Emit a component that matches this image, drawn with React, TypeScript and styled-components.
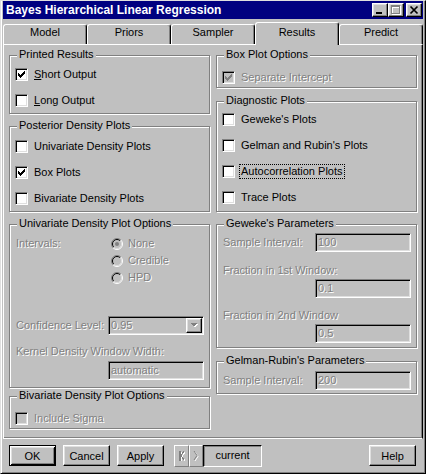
import React from 'react'
import styled, { createGlobalStyle, css } from 'styled-components'

const GlobalStyle = createGlobalStyle`
  html, body {
    margin: 0;
    padding: 0;
    background: #c0c0c0;
  }
  body {
    font-family: "Liberation Sans", Arial, sans-serif;
    font-size: 11px;
    color: #000;
  }
  * {
    box-sizing: border-box;
  }
`

const raised = css`
  border: 1px solid;
  border-color: #fff #000 #000 #fff;
  box-shadow: inset -1px -1px #808080, inset 1px 1px #dfdfdf;
`

const sunken = css`
  border: 1px solid;
  border-color: #808080 #fff #fff #808080;
  box-shadow: inset 1px 1px #000, inset -1px -1px #dfdfdf;
`

const dim = css`
  color: #808080;
  text-shadow: 1px 1px 0 #fff;
`

const Window = styled.div`
  width: 426px;
  height: 474px;
  display: flex;
  flex-direction: column;
  padding: 0 2px 1px 2px;
  border: 1px solid;
  border-color: #dfdfdf #000 #000 #dfdfdf;
  box-shadow: inset 1px 0 #fff, inset -1px -1px #808080;
  background: #c0c0c0;
`

const TitleBar = styled.div`
  height: 18px;
  flex: none;
  display: flex;
  align-items: center;
  padding: 0 1px 0 3px;
  background: #000080;
`

const TitleText = styled.div`
  flex: 1;
  color: #fff;
  font-weight: bold;
  font-size: 12px;
  white-space: nowrap;
`

const CaptionButton = styled.div<{ $gap?: number }>`
  width: 16px;
  height: 14px;
  margin-left: ${p => p.$gap ?? 0}px;
  background: #c0c0c0;
  ${raised}
  svg {
    display: block;
  }
`

const TabStrip = styled.div`
  height: 25px;
  flex: none;
  display: flex;
  align-items: flex-end;
`

const Tab = styled.div<{ $active?: boolean }>`
  position: relative;
  z-index: ${p => (p.$active ? 1 : 0)};
  width: 84px;
  height: ${p => (p.$active ? 23 : 20)}px;
  margin-bottom: ${p => (p.$active ? -1 : 0)}px;
  padding-top: ${p => (p.$active ? 3 : 1)}px;
  background: #c0c0c0;
  border: 1px solid;
  border-bottom: none;
  border-color: #fff #000 transparent #fff;
  border-radius: 3px 3px 0 0;
  box-shadow: inset -1px 0 #808080;
  text-align: center;
  line-height: 13px;
`

const Page = styled.div`
  height: 395px;
  flex: none;
  border: 1px solid;
  border-color: #fff #000 #fff #fff;
  box-shadow: inset -1px 0 #808080, inset 0 -1px #808080;
  padding: 0 4px 0 5px;
  display: grid;
  grid-template-columns: 201px 201px;
  column-gap: 6px;
  align-content: start;
`

const Column = styled.div`
  display: flex;
  flex-direction: column;
`

const Group = styled.div<{ $h: number; $mt: number }>`
  height: ${p => p.$h}px;
  margin-top: ${p => p.$mt}px;
  border: 1px solid #808080;
  box-shadow: inset 1px 1px #fff, 1px 1px #fff;
  padding: 0 5px;
`

const Caption = styled.div`
  width: fit-content;
  margin: -8px 0 0 2px;
  padding: 0 2px;
  line-height: 13px;
  background: #c0c0c0;
  white-space: nowrap;
`

const CheckList = styled.div<{ $mt?: number }>`
  margin-top: ${p => p.$mt ?? 0}px;
`

const CheckRow = styled.div`
  height: 26px;
  display: flex;
  align-items: center;
  gap: 4px;
`

const CheckBox = styled.span<{ $disabled?: boolean }>`
  width: 13px;
  height: 13px;
  flex: none;
  padding: 2px;
  ${sunken}
  background: ${p => (p.$disabled ? '#c0c0c0' : '#fff')};
  svg {
    display: block;
  }
`

const CheckText = styled.span<{ $disabled?: boolean; $focused?: boolean }>`
  padding: 0 1px;
  line-height: 13px;
  white-space: nowrap;
  border: 1px dotted ${p => (p.$focused ? '#000' : 'transparent')};
  ${p => p.$disabled && dim}
  u {
    text-decoration: underline;
    text-underline-offset: 1px;
  }
`

const FieldLabel = styled.div<{ $mt?: number; $w?: number; $lh?: number }>`
  margin-top: ${p => p.$mt ?? 0}px;
  margin-left: 1px;
  width: ${p => (p.$w ? `${p.$w}px` : 'auto')};
  flex: none;
  line-height: ${p => p.$lh ?? 13}px;
  white-space: nowrap;
  ${dim}
`

const FieldRow = styled.div<{ $mt?: number }>`
  margin-top: ${p => p.$mt ?? 0}px;
  display: flex;
  align-items: center;
  justify-content: space-between;
`

const IntervalRow = styled.div`
  margin-top: 5px;
  display: flex;
`

const RadioList = styled.div`
  display: flex;
  flex-direction: column;
  margin-left: 1px;
`

const RadioRow = styled.div`
  height: 17px;
  display: flex;
  align-items: center;
  gap: 5px;
  svg {
    display: block;
    flex: none;
  }
`

const RadioText = styled.span`
  line-height: 13px;
  ${dim}
`

const TextBox = styled.div`
  width: 96px;
  height: 19px;
  margin-left: auto;
  padding: 1px 1px 1px 2px;
  ${sunken}
  background: #c0c0c0;
  line-height: 15px;
  ${dim}
`

const Combo = styled.div`
  width: 96px;
  height: 19px;
  padding: 1px;
  ${sunken}
  background: #c0c0c0;
  display: flex;
  align-items: center;
`

const ComboValue = styled.span`
  flex: 1;
  padding-left: 1px;
  line-height: 15px;
  ${dim}
`

const ComboButton = styled.div`
  width: 16px;
  height: 15px;
  ${raised}
  display: flex;
  align-items: center;
  justify-content: center;
`

const Footer = styled.div`
  height: 33px;
  flex: none;
  display: flex;
  align-items: flex-start;
  gap: 7px;
  padding: 6px 7px 0 6px;
`

const Button = styled.button<{ $default?: boolean }>`
  width: 47px;
  height: 21px;
  padding: 0;
  background: #c0c0c0;
  font: inherit;
  color: #000;
  ${p =>
    p.$default
      ? css`
          border: 1px solid #000;
          box-shadow: inset 1px 1px #fff, inset -1px -1px #000, inset 2px 2px #dfdfdf, inset -2px -2px #808080;
        `
      : raised}
`

const NavGroup = styled.div`
  display: flex;
  margin-left: 3px;
`

const NavButton = styled.div<{ $w: number }>`
  width: ${p => p.$w}px;
  height: 22px;
  border: 1px solid;
  border-color: #fff #808080 #808080 #fff;
  display: flex;
  align-items: center;
  justify-content: center;
`

const CurrentField = styled.div`
  width: 59px;
  height: 22px;
  border: 1px solid;
  border-color: #000 #fff #fff #000;
  box-shadow: inset 1px 1px #808080;
  text-align: center;
  line-height: 18px;
`

const HelpButton = styled(Button)`
  margin-left: auto;
`

const CheckMark: React.FC<{ disabled?: boolean }> = ({ disabled }) => (
  <svg width="7" height="7" viewBox="0 0 7 7" shapeRendering="crispEdges">
    <path
      fill={disabled ? '#808080' : '#000'}
      d="M0 2h1v3H0zM1 3h1v3H1zM2 4h1v3H2zM3 3h1v3H3zM4 2h1v3H4zM5 1h1v3H5zM6 0h1v3H6z"
    />
  </svg>
)

const Check: React.FC<{
  label: React.ReactNode
  checked?: boolean
  disabled?: boolean
  focused?: boolean
}> = ({ label, checked, disabled, focused }) => (
  <CheckRow>
    <CheckBox $disabled={disabled}>{checked && <CheckMark disabled={disabled} />}</CheckBox>
    <CheckText $disabled={disabled} $focused={focused}>
      {label}
    </CheckText>
  </CheckRow>
)

const Radio: React.FC<{ label: string; checked?: boolean }> = ({ label, checked }) => (
  <RadioRow>
    <svg width="12" height="12" viewBox="0 0 12 12">
      <circle cx="6" cy="6" r="4.5" fill="#c0c0c0" />
      <path d="M2.1 9.9A5.5 5.5 0 0 1 9.9 2.1" stroke="#808080" fill="none" />
      <path d="M9.9 2.1A5.5 5.5 0 0 1 2.1 9.9" stroke="#fff" fill="none" />
      <path d="M2.8 9.2A4.5 4.5 0 0 1 9.2 2.8" stroke="#000" fill="none" />
      <path d="M9.2 2.8A4.5 4.5 0 0 1 2.8 9.2" stroke="#dfdfdf" fill="none" />
      {checked && <circle cx="6" cy="6" r="2" fill="#808080" />}
    </svg>
    <RadioText>{label}</RadioText>
  </RadioRow>
)

const tabs = ['Model', 'Priors', 'Sampler', 'Results', 'Predict']

export default function App() {
  return (
    <>
      <GlobalStyle />
      <Window>
        <TitleBar>
          <TitleText>Bayes Hierarchical Linear Regression</TitleText>
          <CaptionButton>
            <svg width="14" height="12" viewBox="0 0 14 12" shapeRendering="crispEdges">
              <rect x="3" y="8" width="6" height="2" fill="#000" />
            </svg>
          </CaptionButton>
          <CaptionButton>
            <svg width="14" height="12" viewBox="0 0 14 12" shapeRendering="crispEdges">
              <path d="M3 2h9v9H3zM4 4v6h7V4z" fill="#fff" fillRule="evenodd" />
              <path d="M2 1h9v9H2zM3 3v6h7V3z" fill="#808080" fillRule="evenodd" />
            </svg>
          </CaptionButton>
          <CaptionButton $gap={2}>
            <svg width="14" height="12" viewBox="0 0 14 12">
              <path d="M3.5 2.5L10.5 9.5M10.5 2.5L3.5 9.5" stroke="#000" strokeWidth="1.7" />
            </svg>
          </CaptionButton>
        </TitleBar>

        <TabStrip>
          {tabs.map(t => (
            <Tab key={t} $active={t === 'Results'}>
              {t}
            </Tab>
          ))}
        </TabStrip>

        <Page>
          <Column>
            <Group $h={59} $mt={10}>
              <Caption>Printed Results</Caption>
              <CheckList>
                <Check checked label={<><u>S</u>hort Output</>} />
                <Check label={<><u>L</u>ong Output</>} />
              </CheckList>
            </Group>

            <Group $h={86} $mt={12}>
              <Caption>Posterior Density Plots</Caption>
              <CheckList $mt={1}>
                <Check label="Univariate Density Plots" />
                <Check checked label="Box Plots" />
                <Check label="Bivariate Density Plots" />
              </CheckList>
            </Group>

            <Group $h={164} $mt={12}>
              <Caption>Univariate Density Plot Options</Caption>
              <IntervalRow>
                <FieldLabel $w={94} $lh={17}>Intervals:</FieldLabel>
                <RadioList>
                  <Radio checked label="None" />
                  <Radio label="Credible" />
                  <Radio label="HPD" />
                </RadioList>
              </IntervalRow>
              <FieldRow $mt={30}>
                <FieldLabel>Confidence Level:</FieldLabel>
                <Combo>
                  <ComboValue>0.95</ComboValue>
                  <ComboButton>
                    <svg width="8" height="5" viewBox="0 0 8 5" shapeRendering="crispEdges">
                      <path d="M1 1h7L4.5 4.5z" fill="#fff" />
                      <path d="M0 0h7L3.5 3.5z" fill="#808080" />
                    </svg>
                  </ComboButton>
                </Combo>
              </FieldRow>
              <FieldLabel $mt={10}>Kernel Density Window Width:</FieldLabel>
              <FieldRow $mt={3}>
                <TextBox>automatic</TextBox>
              </FieldRow>
            </Group>

            <Group $h={33} $mt={8}>
              <Caption>Bivariate Density Plot Options</Caption>
              <CheckList $mt={3}>
                <Check disabled label="Include Sigma" />
              </CheckList>
            </Group>
          </Column>

          <Column>
            <Group $h={33} $mt={10}>
              <Caption>Box Plot Options</Caption>
              <CheckList $mt={3}>
                <Check checked disabled label="Separate Intercept" />
              </CheckList>
            </Group>

            <Group $h={111} $mt={13}>
              <Caption>Diagnostic Plots</Caption>
              <CheckList $mt={-1}>
                <Check label="Geweke's Plots" />
                <Check label="Gelman and Rubin's Plots" />
                <Check focused label="Autocorrelation Plots" />
                <Check label="Trace Plots" />
              </CheckList>
            </Group>

            <Group $h={124} $mt={12}>
              <Caption>Geweke's Parameters</Caption>
              <FieldRow $mt={3}>
                <FieldLabel>Sample Interval:</FieldLabel>
                <TextBox>100</TextBox>
              </FieldRow>
              <FieldLabel $mt={12}>Fraction in 1st Window:</FieldLabel>
              <FieldRow $mt={2}>
                <TextBox>0.1</TextBox>
              </FieldRow>
              <FieldLabel $mt={11}>Fraction in 2nd Window</FieldLabel>
              <FieldRow $mt={2}>
                <TextBox>0.5</TextBox>
              </FieldRow>
            </Group>

            <Group $h={33} $mt={13}>
              <Caption>Gelman-Rubin's Parameters</Caption>
              <FieldRow $mt={4}>
                <FieldLabel>Sample Interval:</FieldLabel>
                <TextBox>200</TextBox>
              </FieldRow>
            </Group>
          </Column>
        </Page>

        <Footer>
          <Button $default>OK</Button>
          <Button>Cancel</Button>
          <Button>Apply</Button>
          <NavGroup>
            <NavButton $w={15}>
              <svg width="7" height="10" viewBox="0 0 7 10" shapeRendering="crispEdges">
                <path d="M2 1h1v9H2zM7 1L4 5.5 7 10" stroke="#fff" fill="none" />
                <path d="M1 0h1v9H1zM6 0L3 4.5 6 9" stroke="#808080" fill="none" />
              </svg>
            </NavButton>
            <NavButton $w={14}>
              <svg width="6" height="10" viewBox="0 0 6 10">
                <path d="M2 1L5 5.5 2 10" stroke="#fff" fill="none" />
                <path d="M1 0L4 4.5 1 9" stroke="#808080" fill="none" />
              </svg>
            </NavButton>
            <CurrentField>current</CurrentField>
          </NavGroup>
          <HelpButton>Help</HelpButton>
        </Footer>
      </Window>
    </>
  )
}
